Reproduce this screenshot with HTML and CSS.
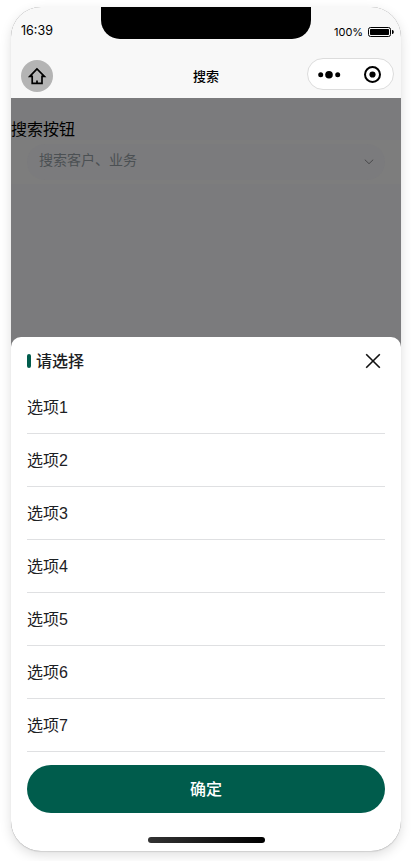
FILE: index.html
```html
<!DOCTYPE html>
<html lang="zh-CN">
<head>
<meta charset="utf-8">
<title>搜索</title>
<link rel="stylesheet" href="styles.css">
</head>
<body>
<div class="phone">
  <header class="top">
    <div class="status">
      <span class="time">16:39</span>
      <div class="notch"></div>
      <div class="power">
        <span>100%</span>
        <svg width="26" height="10" viewBox="0 0 26 10"><rect x=".5" y=".5" width="22" height="9" rx="2" fill="none" stroke="#000"/><rect x="2" y="2" width="19" height="6" rx=".8"/><path d="M24 3h.6q1.2.3 1.2 2t-1.2 2H24z"/></svg>
      </div>
    </div>
    <nav class="nav">
      <div class="home">
        <svg width="32" height="32" viewBox="0 0 32 32" fill="none" stroke="#000" stroke-width="1.7" stroke-linejoin="miter"><path d="M16 8.9 8.8 16.4h2.4v7h9.8v-7h2.4zM16 20.6v2.8"/></svg>
      </div>
      <h1 class="title">搜索</h1>
      <div class="capsule">
        <svg width="85" height="30" viewBox="0 0 85 30"><circle cx="12.7" cy="15.7" r="2.5"/><circle cx="21" cy="15.7" r="3.8"/><circle cx="29.7" cy="15.7" r="2.5"/><circle cx="64.5" cy="15.5" r="7.5" fill="none" stroke="#000" stroke-width="2"/><circle cx="64.5" cy="15.5" r="3.1"/></svg>
      </div>
    </nav>
  </header>
  <main class="page">
    <p class="label">搜索按钮</p>
    <div class="search-wrap">
      <div class="search">
        <span>搜索客户、业务</span>
        <svg width="10" height="6" viewBox="0 0 10 6" fill="none" stroke="#48484a"><path d="m.8.7 4.2 4 4.2-4"/></svg>
      </div>
    </div>
  </main>
  <section class="sheet">
    <div class="sheet-head">
      <i class="mark"></i>
      <h2>请选择</h2>
      <svg width="16" height="16" viewBox="0 0 16 16" fill="none" stroke="#111" stroke-width="1.6"><path d="m1.2 1.2 13.6 13.6M14.8 1.2 1.2 14.8"/></svg>
    </div>
    <ul class="options">
      <li>选项1</li>
      <li>选项2</li>
      <li>选项3</li>
      <li>选项4</li>
      <li>选项5</li>
      <li>选项6</li>
      <li>选项7</li>
    </ul>
    <button class="confirm">确定</button>
    <div class="indicator"></div>
  </section>
</div>
</body>
</html>
```
FILE: styles.css
```css
* { box-sizing: border-box; margin: 0; padding: 0; }
body {
  height: 861px;
  padding: 7px 10px 0 11px;
  overflow: hidden;
  background: #fff;
  font-family: Inter, "Noto Sans CJK SC", sans-serif;
  color: #000;
}
svg { display: block; flex: none; }
.phone {
  display: flex;
  flex-direction: column;
  width: 390px;
  height: 844px;
  overflow: hidden;
  border-radius: 30px;
  background: #7b7b7d;
  box-shadow: 0 1px 1px rgba(0, 0, 0, .1), 0 4px 12px rgba(0, 0, 0, .13);
}
.top { height: 91px; background: #f8f8f8; }
.status {
  display: grid;
  grid-template-columns: 90px 210px 90px;
  height: 47px;
}
.time { padding: 15px 0 0 10px; font-size: 12.5px; line-height: 18px; }
.notch { height: 32px; border-radius: 0 0 19px 19px; background: #000; }
.power {
  display: flex;
  gap: 5px;
  height: 18px;
  margin-top: 16px;
  padding-left: 23px;
  align-items: center;
  font-size: 11px;
  white-space: nowrap;
}
.nav {
  display: grid;
  grid-template-columns: 87px 1fr 87px;
  height: 44px;
  padding: 0 7px 0 10px;
}
.home { width: 32px; height: 32px; margin-top: 6px; border-radius: 50%; background: #b4b4b4; }
.title { padding: 12px 0 0 0; margin-left: -3px; text-align: center; font-size: 13px; line-height: 20px; font-weight: 500; }
.capsule { width: 87px; height: 32px; margin-top: 4px; border: 1px solid #dcdcdc; border-radius: 16px; background: #fff; }
.page { flex: 1; }
.label { height: 42px; padding-top: 19px; font-size: 16px; line-height: 24px; }
.search-wrap { height: 44px; padding: 4px 16px; background: #7d7d7d; }
.search {
  display: flex;
  align-items: center;
  justify-content: space-between;
  height: 36px;
  padding: 0 11px 0 12px;
  border-radius: 18px;
  background: #7b7b7d;
  color: #4b5053;
  font-size: 14px;
}
.search span { margin-top: -7px; }
.sheet {
  height: 514px;
  padding: 0 16px;
  border-radius: 10px 10px 0 0;
  background: #fff;
  color: #1d2124;
}
.sheet-head { display: flex; align-items: center; height: 44px; padding: 4px 4px 0 0; }
.mark { width: 4px; height: 14px; margin-right: 5px; border-radius: 2px; background: #005c4c; }
.sheet-head h2 { flex: 1; font-size: 16px; line-height: 24px; font-weight: 500; }
.options { list-style: none; font-family: "Liberation Sans", "Noto Sans CJK SC", sans-serif; }
.options li { height: 53px; padding-top: 1px; border-bottom: 1px solid #dfe0e2; font-size: 16px; line-height: 52px; }
.confirm {
  display: block;
  width: 358px;
  height: 48px;
  margin-top: 13px;
  padding-bottom: 2px;
  border: 0;
  border-radius: 24px;
  background: #005c4c;
  color: #fff;
  font: 500 16px Inter, "Noto Sans CJK SC", sans-serif;
}
.indicator { width: 117px; height: 6px; margin: 24px 0 0 121px; border-radius: 3px; background: linear-gradient(90deg, #333, #000); }
```
